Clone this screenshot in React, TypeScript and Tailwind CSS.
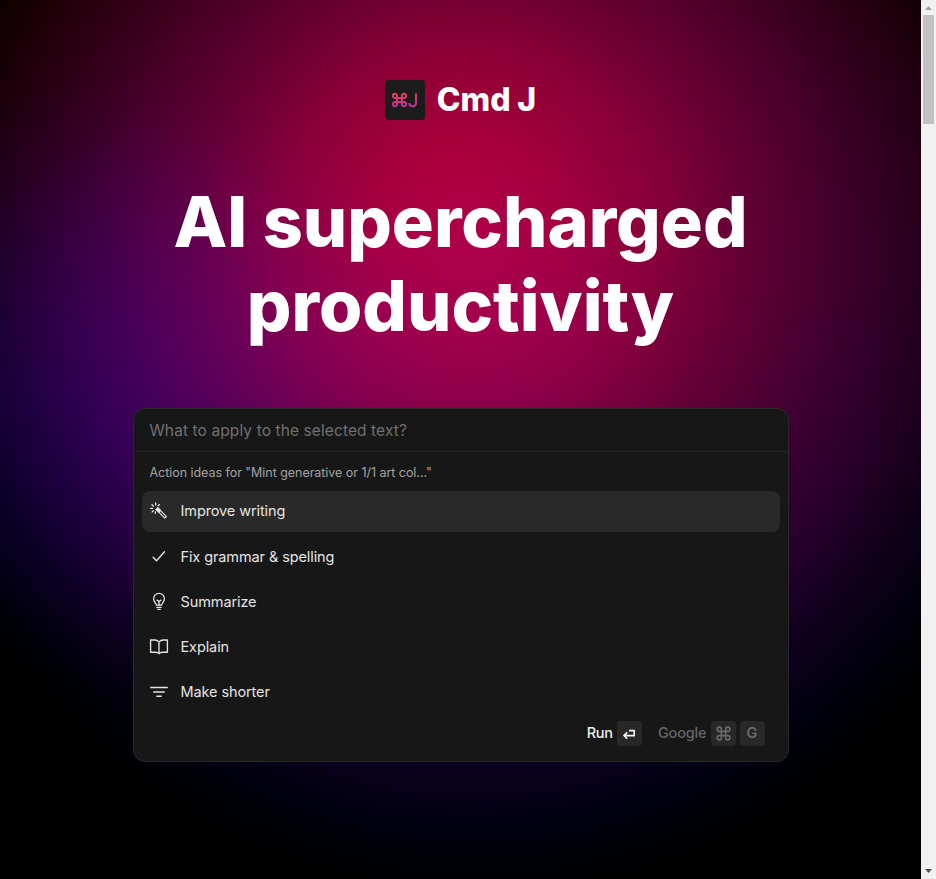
import React from "react";
import type { ReactNode } from "react";

function Icon({ children, className = "" }: { children: ReactNode; className?: string }) {
  return (
    <svg
      viewBox="0 0 20 20"
      className={`h-5 w-5 shrink-0 ${className}`}
      fill="none"
      stroke="currentColor"
      strokeWidth="1.35"
      strokeLinecap="round"
      strokeLinejoin="round"
    >
      {children}
    </svg>
  );
}

const wand = (
  <Icon>
    <path d="M7.2 8.6 8.9 6.9 17.4 15.6 15.8 17.2Z" strokeWidth="1.2" />
    <path d="M7.2 8.6 8.9 6.9 11.4 9.4 9.7 11.1Z" fill="currentColor" />
    <path d="M6.7 2V3.9M3 3.8 4.3 5.1M1.8 7.4H3.5M3.2 10.9 4.3 9.8M10.3 3.6 9.2 4.8M6.4 10.8V12.2" />
  </Icon>
);
const check = (
  <Icon>
    <path d="M4.1 10.2 7.5 13.8 15.5 4.7" />
  </Icon>
);
const bulb = (
  <Icon>
    <path d="M7.4 13.1C7.2 11.2 4.6 10.1 4.6 6.7A5.4 5.4 0 0 1 15.4 6.7C15.4 10.1 12.8 11.2 12.6 13.1Z" />
    <path d="M8 8.1 10 9.5 12 8.1M10 9.5V12.9M7.8 15.3H12.2M8.8 17.4H11.2" />
  </Icon>
);
const book = (
  <Icon>
    <path d="M10 4.9C8.8 3.6 7.6 3 5.8 3H1.6V15.2H6.5C8 15.2 9.2 15.7 10 16.7C10.8 15.7 12 15.2 13.5 15.2H18.4V3H14.2C12.4 3 11.2 3.6 10 4.9ZM10 4.9V16.5" />
  </Icon>
);
const lines = (
  <Icon>
    <path d="M1.7 5.5H18.3M4.7 10H15.3M7.8 14.2H12.2" />
  </Icon>
);

const actions = [
  { label: "Improve writing", icon: wand },
  { label: "Fix grammar & spelling", icon: check },
  { label: "Summarize", icon: bulb },
  { label: "Explain", icon: book },
  { label: "Make shorter", icon: lines },
];

const commandPath =
  "M15 6v12a3 3 0 1 0 3-3H6a3 3 0 1 0 3 3V6a3 3 0 1 0-3 3h12a3 3 0 1 0-3-3";

function Key({ children }: { children: ReactNode }) {
  return (
    <span className="flex h-[25px] w-[25px] items-center justify-center rounded bg-[#282828]">
      {children}
    </span>
  );
}

function Logo() {
  return (
    <div className="flex h-10 w-10 items-center justify-center rounded bg-[#1c1c1c]">
      <svg viewBox="0 0 40 40" className="h-10 w-10" fill="none">
        <defs>
          <linearGradient id="logo" x1="0" y1="12" x2="0" y2="28" gradientUnits="userSpaceOnUse">
            <stop stopColor="#f43f4f" />
            <stop offset="1" stopColor="#b32fa0" />
          </linearGradient>
        </defs>
        <path
          d="M17 16V24A2.1 2.1 0 1 0 19.1 22.1H9.9A2.1 2.1 0 1 0 12 24V16A2.1 2.1 0 1 0 9.9 17.9H19.1A2.1 2.1 0 1 0 17 16Z"
          stroke="url(#logo)"
          strokeWidth="2"
        />
        <path d="M31 13.5V22.4C31 24.9 29.8 26.3 27.6 26.3C25.5 26.3 24.3 25 24.2 23" stroke="url(#logo)" strokeWidth="1.9" />
      </svg>
    </div>
  );
}

function Scrollbar() {
  return (
    <div className="flex w-[15px] shrink-0 flex-col items-center justify-between bg-[#f1f1f1]">
      <div className="flex flex-col items-center">
        <svg viewBox="0 0 15 15" className="h-[15px] w-[15px]">
          <path d="M4 10 7.5 6 11 10Z" fill="#a0a0a0" />
        </svg>
        <div className="h-[109px] w-[11px] bg-[#c1c1c1]" />
      </div>
      <svg viewBox="0 0 15 15" className="h-[15px] w-[15px]">
        <path d="M4 5 7.5 9 11 5Z" fill="#505050" />
      </svg>
    </div>
  );
}

export default function App() {
  return (
    <div className="flex h-[879px] w-[936px] overflow-hidden bg-black font-['Inter',sans-serif]">
      <main className="flex flex-1 flex-col items-center bg-[radial-gradient(circle_at_470px_235px,#ac0000_0px,#a40000_90px,#860000_190px,#6c0000_250px,#520000_320px,#400000_370px,#2c0000_430px,#200000_470px,#0c0000_530px,#000_590px),radial-gradient(circle_at_480px_330px,#00004e_0px,#000048_90px,#00003a_190px,#000032_320px,#00002a_390px,#00001c_450px,#000010_500px,#000_570px),radial-gradient(circle_at_140px_380px,#000034_0px,#000030_70px,#000026_130px,#000018_190px,#00000a_250px,#000_310px),radial-gradient(circle_at_430px_130px,#100000_0px,#080000_90px,#000_180px)] bg-blend-screen">
        <div className="mt-20 flex items-center gap-3">
          <Logo />
          <span className="-mt-px text-[32px] leading-10 font-extrabold tracking-[-0.1px] text-white">Cmd J</span>
        </div>
        <h1 className="mt-[60px] text-center text-[70px] leading-[84px] font-extrabold tracking-[0px] text-white">
          AI supercharged
          <br />
          productivity
        </h1>
        <section className="mt-[60px] flex h-[354px] w-[656px] flex-col rounded-xl border border-[#29292b] bg-[#171717]">
          <div className="flex h-[43px] items-center border-b border-[#222] px-4 pt-px text-[15.5px] tracking-[0.1px] text-[#707070]">
            What to apply to the selected text?
          </div>
          <div className="flex h-[39px] items-center px-4 pt-1 text-[12.5px] tracking-[-0.04px] text-[#a2a2a2]">
            Action ideas for "Mint generative or 1/1 art col..."
          </div>
          <ul className="flex flex-col gap-1 px-2">
            {actions.map((action, i) => (
              <li
                key={action.label}
                className={`flex h-[41px] items-center gap-3 rounded-lg px-[7px] text-[14.5px] tracking-[-0.1px] text-[#e4e4e4] ${
                  i === 0 ? "bg-[#292929] pb-px" : ""
                }`}
              >
                {action.icon}
                {action.label}
              </li>
            ))}
          </ul>
          <div className="mt-[9px] flex items-center justify-end pr-[23px] text-[14.5px]">
            <span className="mr-1 -mt-0.5 font-medium tracking-[-0.2px] text-[#f0f0f0]">Run</span>
            <Key>
              <svg viewBox="0 0 16 16" className="h-4 w-4" fill="none" stroke="#f4f4f4" strokeWidth="1.6">
                <path d="M8 4.6H13.2V9.6H3.2M6.2 6.4 3 9.6 6.2 12.8" />
              </svg>
            </Key>
            <span className="mr-1 -mt-0.5 ml-4 font-medium tracking-[-0.15px] text-[#666]">Google</span>
            <Key>
              <svg viewBox="0 0 24 24" className="h-[17px] w-[17px]" fill="none" stroke="#6a6a6a" strokeWidth="2.2">
                <path d={commandPath} />
              </svg>
            </Key>
            <span className="w-1" />
            <Key>
              <span className="-mt-0.5 font-medium text-[#737373]">G</span>
            </Key>
          </div>
        </section>
      </main>
      <Scrollbar />
    </div>
  );
}
